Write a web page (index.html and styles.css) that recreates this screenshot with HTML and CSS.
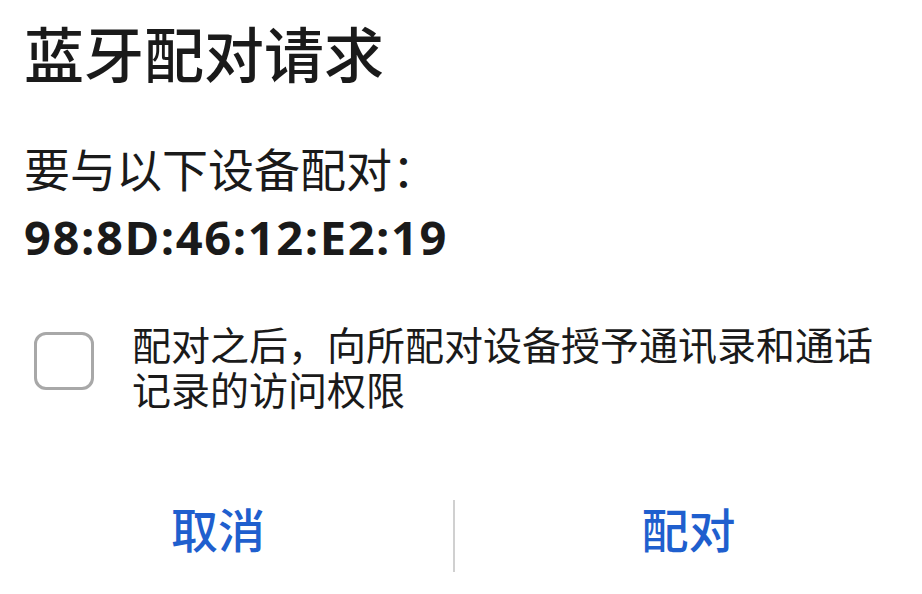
FILE: index.html
```html
<!DOCTYPE html>
<html>
<head>
	<title>蓝牙配对请求</title>
	<meta charset="UTF-8">
	<meta name="viewport" content="width=device-width, initial-scale=1.0">
	<link rel="stylesheet" href="styles.css">
</head>
<body>
	<div class="dialog">
		<h1 class="dialog-title">蓝牙配对请求</h1>
		<p class="message">要与以下设备配对：</p>
		<p class="address">98:8D:46:12:E2:19</p>
		<label class="consent">
			<input type="checkbox" class="consent-check">
			<span class="check-box"></span>
			<span class="consent-text">配对之后，向所配对设备授予通讯录和通话记录的访问权限</span>
		</label>
		<div class="actions">
			<button class="action-btn cancel-btn">取消</button>
			<span class="divider"></span>
			<button class="action-btn pair-btn">配对</button>
		</div>
	</div>
</body>
</html>
```

FILE: styles.css
```css
body {
	margin: 0;
	background-color: #fff;
	font-family: "Noto Sans CJK SC", "Noto Sans", sans-serif;
	color: #1a1a1a;
}
.dialog {
	width: 922px;
	height: 594px;
	overflow: hidden;
}
.dialog-title {
	margin: 0;
	padding: 17px 0 0 24px;
	font-size: 60px;
	font-weight: 500;
	line-height: 70px;
}
.message {
	margin: 0;
	padding: 52px 0 0 24px;
	font-size: 46px;
	line-height: 56px;
}
.address {
	margin: 0;
	padding: 14px 0 0 24px;
	font-family: "Open Sans", "Noto Sans", sans-serif;
	font-size: 47px;
	font-weight: 700;
	letter-spacing: 1.6px;
	line-height: 56px;
}
.consent {
	display: flex;
	align-items: flex-start;
	padding: 67px 40px 0 34px;
}
.consent-check {
	display: none;
}
.check-box {
	flex: 0 0 auto;
	width: 54px;
	height: 52px;
	border: 3px solid #a8a8a8;
	border-radius: 12px;
}
.consent-text {
	margin-left: 38px;
	margin-top: -11px;
	font-size: 39px;
	line-height: 45px;
}
.actions {
	display: flex;
	align-items: center;
	margin-top: 87px;
}
.action-btn {
	padding: 0 0 16px;
	border: none;
	background: none;
	font-family: "Noto Sans CJK SC", sans-serif;
	font-size: 47px;
	font-weight: 500;
	color: #1f5fce;
	line-height: 60px;
	cursor: pointer;
}
.cancel-btn {
	width: 436px;
}
.divider {
	width: 2px;
	height: 72px;
	margin-left: 17px;
	background-color: #d0d0d0;
}
.pair-btn {
	flex: 1;
}
```
